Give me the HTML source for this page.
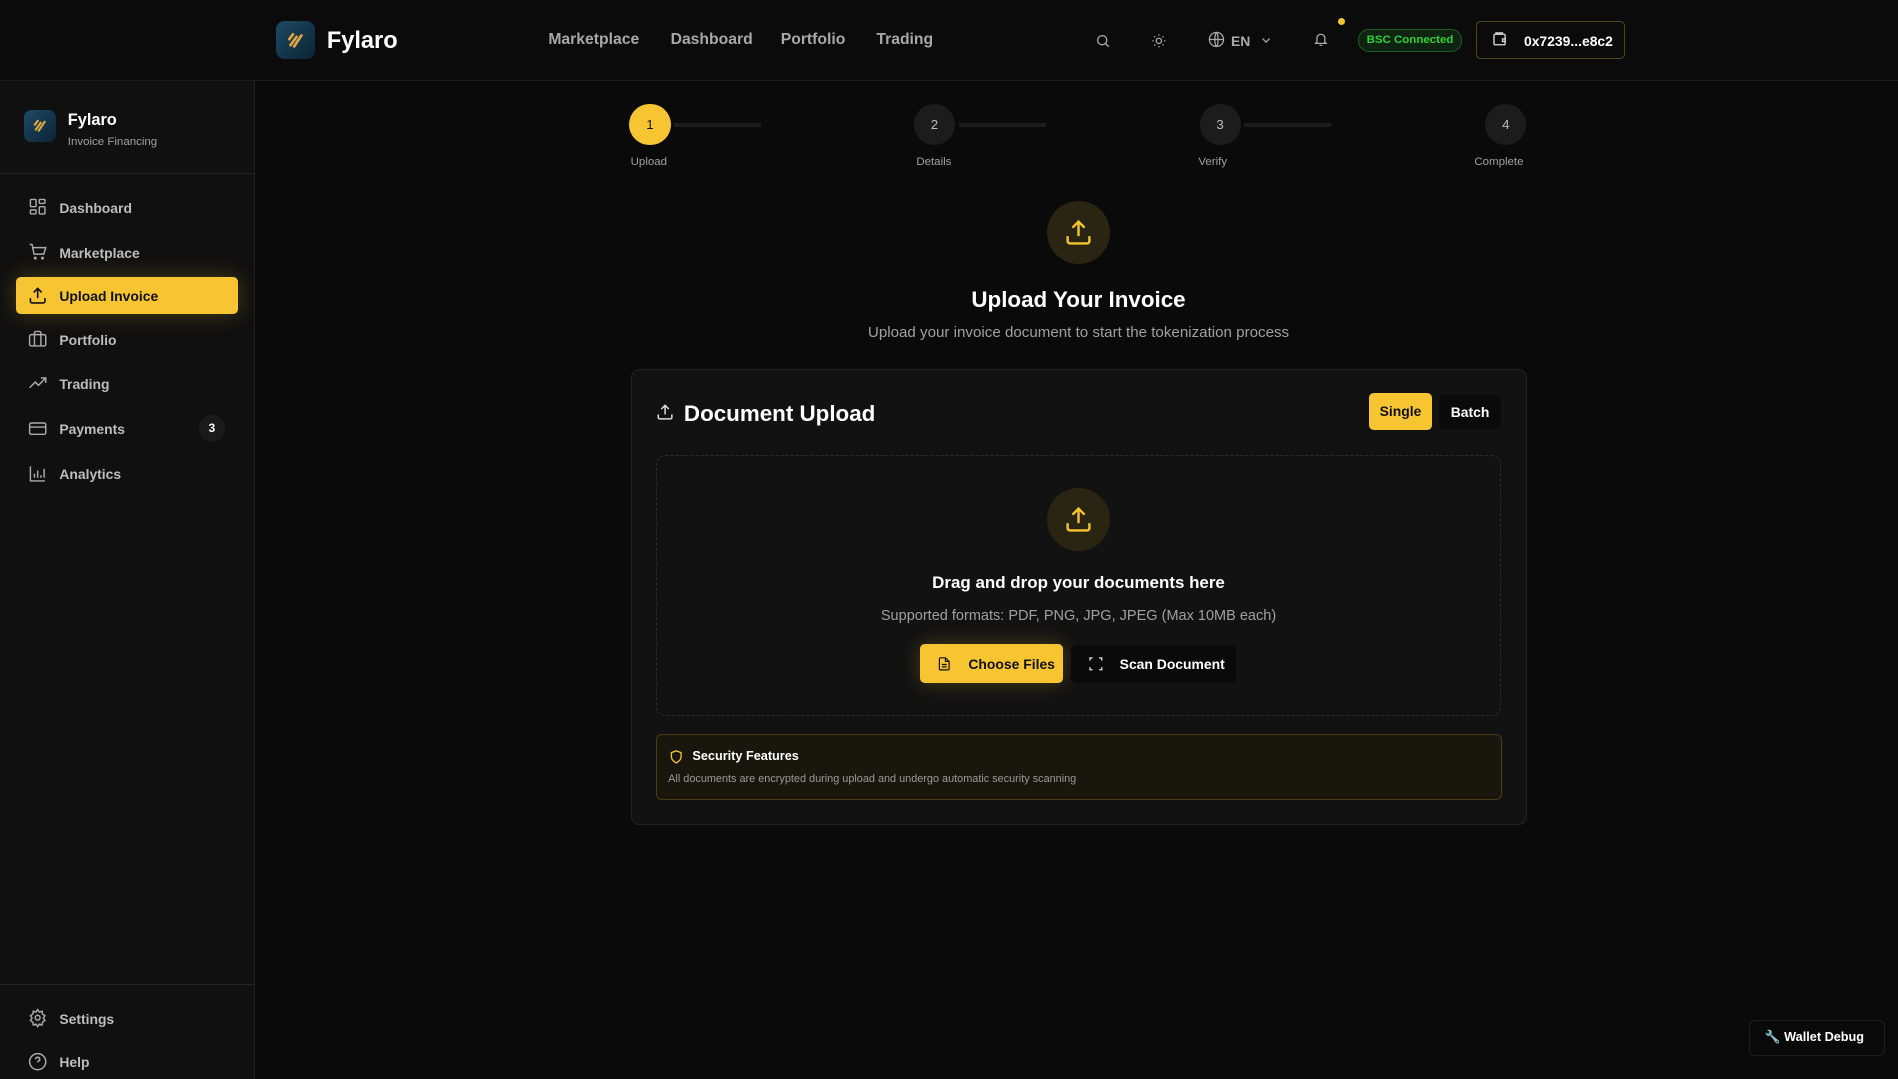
<!DOCTYPE html>
<html><head><meta charset="utf-8"><style>
html,body{margin:0;padding:0;background:#0a0a0a;overflow:hidden;width:1898px;height:1079px}
#root{position:relative;width:1568px;height:891px;zoom:1.21046;font-family:"Liberation Sans",sans-serif;color:#fff;background:#0a0a0a}
.a{position:absolute}
svg{display:block}
.nav{position:absolute;top:26px;font-size:13px;color:#a8a8a8;font-weight:bold}
.si{position:absolute;left:23px;width:16px;height:16px}
.st{position:absolute;left:49px;font-size:11.5px;color:#bdbdbd;font-weight:bold}
.circ{position:absolute;width:34px;height:34px;border-radius:50%;background:#1c1c1c;color:#bbb;font-size:11px;text-align:center;line-height:34px;top:86px}
.line{position:absolute;height:3px;background:#1c1c1c;top:102px;width:72px}
.lbl{position:absolute;top:129px;font-size:9.5px;color:#a0a0a0}
</style></head><body><div id="root">

<!-- header -->
<div class="a" style="left:0;top:0;width:1568px;height:66px;background:#0b0b0b;border-bottom:1px solid #1c1c1c"></div>
<div class="a" style="left:228px;top:17px;width:32px;height:32px;border-radius:7px;background:linear-gradient(135deg,#1d4a66,#0c2333)">
<svg width="32" height="32" viewBox="0 0 32 32"><path d="M12 20 L17 13 M15 21 L21 12 M11 15 L14 11" stroke="#e0a640" stroke-width="2.2" stroke-linecap="round" fill="none"/></svg></div>
<div class="a" style="left:270px;top:23px;font-size:19.5px;font-weight:bold">Fylaro</div>
<div class="nav" style="left:453px">Marketplace</div>
<div class="nav" style="left:554px">Dashboard</div>
<div class="nav" style="left:645px">Portfolio</div>
<div class="nav" style="left:724px">Trading</div>

<svg class="a" style="left:905px;top:27px" width="13" height="13" viewBox="0 0 24 24" fill="none" stroke="#aaa" stroke-width="2"><circle cx="11" cy="11" r="7"/><path d="M16 16l5 5"/></svg>
<svg class="a" style="left:951px;top:27px" width="13" height="13" viewBox="0 0 24 24" fill="none" stroke="#aaa" stroke-width="2"><circle cx="12" cy="12" r="4"/><path d="M12 2v2M12 20v2M2 12h2M20 12h2M5 5l1.5 1.5M17.5 17.5L19 19M5 19l1.5-1.5M17.5 6.5L19 5"/></svg>
<svg class="a" style="left:998px;top:26px" width="14" height="14" viewBox="0 0 24 24" fill="none" stroke="#aaa" stroke-width="1.8"><circle cx="12" cy="12" r="10"/><path d="M2 12h20M12 2c3 3 3 17 0 20M12 2c-3 3-3 17 0 20"/></svg>
<div class="a" style="left:1017px;top:27px;font-size:11.5px;color:#aaa;font-weight:bold">EN</div>
<svg class="a" style="left:1041px;top:28px" width="10" height="10" viewBox="0 0 24 24" fill="none" stroke="#aaa" stroke-width="2.5"><path d="M5 9l7 7 7-7"/></svg>
<svg class="a" style="left:1085px;top:26px" width="13" height="14" viewBox="0 0 24 24" fill="none" stroke="#aaa" stroke-width="2"><path d="M6 16V10a6 6 0 0 1 12 0v6l2 2H4z M10 21h4"/></svg>
<div class="a" style="left:1105px;top:15px;width:6px;height:6px;border-radius:50%;background:#f5c431"></div>
<div class="a" style="left:1122px;top:24px;width:84px;height:17px;border-radius:9px;background:#0e2410;border:1px solid #1f5e22;color:#2fcf35;font-size:9.5px;font-weight:bold;text-align:center;line-height:17px">BSC Connected</div>
<div class="a" style="left:1219px;top:17px;width:122px;height:30px;border-radius:4px;border:1px solid #54441a;background:#0b0b0b"></div>
<svg class="a" style="left:1233px;top:26px" width="13" height="13" viewBox="0 0 24 24" fill="none" stroke="#ddd" stroke-width="2"><rect x="3" y="5" width="17" height="16" rx="2"/><path d="M6 5V3h10v2M16 12h4v4h-4z"/></svg>
<div class="a" style="left:1259px;top:27px;font-size:11.5px;font-weight:bold">0x7239...e8c2</div>

<!-- sidebar -->
<div class="a" style="left:0;top:67px;width:210px;height:824px;background:#101010;border-right:1px solid #1e1e1e"></div>
<div class="a" style="left:20px;top:91px;width:26px;height:26px;border-radius:6px;background:linear-gradient(135deg,#1d4a66,#0c2333)">
<svg width="26" height="26" viewBox="0 0 32 32"><path d="M12 20 L17 13 M15 21 L21 12 M11 15 L14 11" stroke="#e0a640" stroke-width="2.2" stroke-linecap="round" fill="none"/></svg></div>
<div class="a" style="left:56px;top:92px;font-size:13.5px;font-weight:bold">Fylaro</div>
<div class="a" style="left:56px;top:112px;font-size:9.5px;color:#a0a0a0">Invoice Financing</div>
<div class="a" style="left:0;top:143px;width:210px;height:1px;background:#222"></div>

<svg class="si" style="top:163px" viewBox="0 0 24 24" fill="none" stroke="#aaa" stroke-width="1.8"><rect x="3" y="3" width="7" height="9" rx="1"/><rect x="14" y="3" width="7" height="5" rx="1"/><rect x="14" y="12" width="7" height="9" rx="1"/><rect x="3" y="16" width="7" height="5" rx="1"/></svg>
<div class="st" style="top:165px">Dashboard</div>
<svg class="si" style="top:200px" viewBox="0 0 24 24" fill="none" stroke="#aaa" stroke-width="1.8"><path d="M2 3h3l2.5 12h12L22 7H6"/><circle cx="9" cy="20" r="1"/><circle cx="18" cy="20" r="1"/></svg>
<div class="st" style="top:202px">Marketplace</div>
<div class="a" style="left:13px;top:229px;width:184px;height:30px;border-radius:4px;background:#f7c531;box-shadow:0 0 18px rgba(247,197,49,.25)"></div>
<svg class="si" style="top:236px" viewBox="0 0 24 24" fill="none" stroke="#111" stroke-width="2"><path d="M12 15V3M7 8l5-5 5 5M3 15v4a2 2 0 0 0 2 2h14a2 2 0 0 0 2-2v-4"/></svg>
<div class="st" style="top:238px;color:#111">Upload Invoice</div>
<svg class="si" style="top:272px" viewBox="0 0 24 24" fill="none" stroke="#aaa" stroke-width="1.8"><rect x="2" y="7" width="20" height="14" rx="2"/><path d="M8 21V5a2 2 0 0 1 2-2h4a2 2 0 0 1 2 2v16"/></svg>
<div class="st" style="top:274px">Portfolio</div>
<svg class="si" style="top:309px" viewBox="0 0 24 24" fill="none" stroke="#aaa" stroke-width="1.8"><path d="M2 17l7-7 4 4 9-9M16 5h6v6"/></svg>
<div class="st" style="top:311px">Trading</div>
<svg class="si" style="top:346px" viewBox="0 0 24 24" fill="none" stroke="#aaa" stroke-width="1.8"><rect x="2" y="5" width="20" height="14" rx="2"/><path d="M2 10h20"/></svg>
<div class="st" style="top:348px">Payments</div>
<div class="a" style="left:164px;top:343px;width:22px;height:22px;border-radius:50%;background:#1a1a1a;font-size:10px;font-weight:bold;text-align:center;line-height:22px">3</div>
<svg class="si" style="top:383px" viewBox="0 0 24 24" fill="none" stroke="#aaa" stroke-width="1.8"><path d="M3 3v18h18M8 17v-5M12 17V8M16 17v-3M20 17V6"/></svg>
<div class="st" style="top:385px">Analytics</div>

<div class="a" style="left:0;top:813px;width:210px;height:1px;background:#222"></div>
<svg class="si" style="top:833px" viewBox="0 0 24 24" fill="none" stroke="#aaa" stroke-width="1.8"><circle cx="12" cy="12" r="3"/><path d="M12 2l2 3 3.5-1 .5 3.5 3 2-2 3 2 3-3 2-.5 3.5-3.5-1-2 3-2-3-3.5 1-.5-3.5-3-2 2-3-2-3 3-2 .5-3.5 3.5 1z"/></svg>
<div class="st" style="top:835px">Settings</div>
<svg class="si" style="top:869px" viewBox="0 0 24 24" fill="none" stroke="#aaa" stroke-width="1.8"><circle cx="12" cy="12" r="10"/><path d="M9.5 9a2.5 2.5 0 1 1 3.5 2.3c-.7.4-1 1-1 1.7M12 17h.01"/></svg>
<div class="st" style="top:871px">Help</div>

<!-- stepper -->
<div class="circ" style="left:520px;background:#f7c531;color:#111">1</div>
<div class="line" style="left:557px"></div>
<div class="lbl" style="left:521px">Upload</div>
<div class="circ" style="left:755px">2</div>
<div class="line" style="left:792px"></div>
<div class="lbl" style="left:757px">Details</div>
<div class="circ" style="left:991px">3</div>
<div class="line" style="left:1028px"></div>
<div class="lbl" style="left:990px">Verify</div>
<div class="circ" style="left:1227px">4</div>
<div class="lbl" style="left:1218px">Complete</div>

<div class="a" style="left:865px;top:166px;width:52px;height:52px;border-radius:50%;background:#2a2413"></div>
<svg class="a" style="left:879px;top:180px" width="24" height="24" viewBox="0 0 24 24" fill="none" stroke="#f5c431" stroke-width="2"><path d="M12 15V3M7 8l5-5 5 5M3 15v4a2 2 0 0 0 2 2h14a2 2 0 0 0 2-2v-4"/></svg>
<div class="a" style="left:0;width:1782px;top:237px;text-align:center;font-size:18.5px;font-weight:bold">Upload Your Invoice</div>
<div class="a" style="left:0;width:1782px;top:268px;text-align:center;font-size:12.5px;color:#a0a0a0">Upload your invoice document to start the tokenization process</div>

<!-- card -->
<div class="a" style="left:521px;top:305px;width:739px;height:375px;border-radius:7px;background:#121212;border:1px solid #222"></div>
<svg class="a" style="left:542px;top:333px" width="15" height="15" viewBox="0 0 24 24" fill="none" stroke="#ddd" stroke-width="2"><path d="M12 15V3M7 8l5-5 5 5M3 15v4a2 2 0 0 0 2 2h14a2 2 0 0 0 2-2v-4"/></svg>
<div class="a" style="left:565px;top:331px;font-size:18.5px;font-weight:bold">Document Upload</div>
<div class="a" style="left:1131px;top:325px;width:52px;height:30px;border-radius:4px;background:#f7c531;color:#111;font-size:11.5px;font-weight:bold;text-align:center;line-height:31px">Single</div>
<div class="a" style="left:1189px;top:326px;width:51px;height:28px;border-radius:4px;background:#0a0a0a;font-size:11.5px;font-weight:bold;text-align:center;line-height:29px">Batch</div>

<div class="a" style="left:542px;top:376px;width:696px;height:214px;border-radius:8px;border:1px dashed #2c2c2c"></div>
<div class="a" style="left:865px;top:403px;width:52px;height:52px;border-radius:50%;background:#2a2413"></div>
<svg class="a" style="left:879px;top:417px" width="24" height="24" viewBox="0 0 24 24" fill="none" stroke="#f5c431" stroke-width="2"><path d="M12 15V3M7 8l5-5 5 5M3 15v4a2 2 0 0 0 2 2h14a2 2 0 0 0 2-2v-4"/></svg>
<div class="a" style="left:0;width:1782px;top:473px;text-align:center;font-size:14px;font-weight:bold">Drag and drop your documents here</div>
<div class="a" style="left:0;width:1782px;top:502px;text-align:center;font-size:12px;color:#a0a0a0">Supported formats: PDF, PNG, JPG, JPEG (Max 10MB each)</div>
<div class="a" style="left:760px;top:532px;width:118px;height:32px;border-radius:4px;background:#f7c531;box-shadow:0 0 16px rgba(247,197,49,.25)"></div>
<svg class="a" style="left:774px;top:542px" width="12" height="13" viewBox="0 0 24 24" fill="none" stroke="#111" stroke-width="2"><path d="M14 2H6a2 2 0 0 0-2 2v16a2 2 0 0 0 2 2h12a2 2 0 0 0 2-2V8z M14 2v6h6M8 13h8M8 17h8"/></svg>
<div class="a" style="left:800px;top:542px;font-size:11.5px;font-weight:bold;color:#111">Choose Files</div>
<div class="a" style="left:885px;top:533px;width:136px;height:31px;border-radius:4px;background:#0a0a0a"></div>
<svg class="a" style="left:899px;top:542px" width="13" height="13" viewBox="0 0 24 24" fill="none" stroke="#ddd" stroke-width="2"><path d="M3 7V3h4M17 3h4v4M21 17v4h-4M7 21H3v-4"/></svg>
<div class="a" style="left:925px;top:542px;font-size:11.5px;font-weight:bold">Scan Document</div>

<div class="a" style="left:542px;top:606px;width:697px;height:53px;border-radius:5px;background:#19160d;border:1px solid #4a3d16"></div>
<svg class="a" style="left:553px;top:619px" width="12" height="13" viewBox="0 0 24 24" fill="none" stroke="#f5c431" stroke-width="2.2"><path d="M12 22s8-4 8-10V5l-8-3-8 3v7c0 6 8 10 8 10z"/></svg>
<div class="a" style="left:572px;top:619px;font-size:10.5px;font-weight:bold">Security Features</div>
<div class="a" style="left:552px;top:639px;font-size:9px;color:#9a9a9a">All documents are encrypted during upload and undergo automatic security scanning</div>

<div class="a" style="left:1445px;top:843px;width:111px;height:28px;border-radius:5px;background:#0a0a0a;border:1px solid #1e1e1e"></div>
<div class="a" style="left:1458px;top:851px;font-size:10.5px;font-weight:bold">🔧 Wallet Debug</div>
</div></body></html>
